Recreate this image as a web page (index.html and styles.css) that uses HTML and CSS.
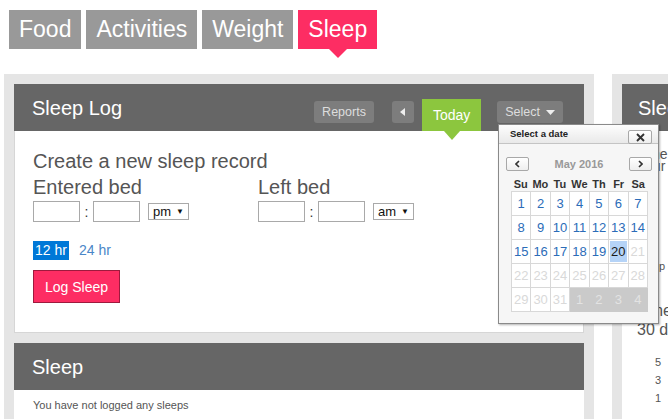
FILE: index.html
```html
<!DOCTYPE html>
<html lang="en">
<head>
<meta charset="utf-8">
<title>Sleep</title>
<link rel="stylesheet" href="styles.css">
</head>
<body>
<nav class="tabs">
  <a class="tab">Food</a>
  <a class="tab">Activities</a>
  <a class="tab">Weight</a>
  <a class="tab active">Sleep</a>
</nav>
<div class="main">
  <div class="col col-left">
    <section class="panel">
      <header class="panel-head">
        <h2 class="panel-title">Sleep Log</h2>
        <div class="controls">
          <button class="btn btn-reports">Reports</button>
          <button class="btn btn-arrow"><svg width="5" height="8" viewBox="0 0 5 8"><path d="M5 0 L0 4 L5 8 Z" fill="#eee"/></svg></button>
          <button class="btn-today">Today</button>
          <button class="btn btn-select">Select <svg class="caret" width="9" height="5" viewBox="0 0 9 5"><path d="M0 0 H9 L4.5 5 Z" fill="#eee"/></svg></button>
        </div>
        <div class="datepicker">
          <div class="dp-title">Select a date</div>
          <button class="dp-close"><svg width="9" height="9" viewBox="0 0 9 9"><path d="M1 1 L8 8 M8 1 L1 8" stroke="#333" stroke-width="1.9"/></svg></button>
          <div class="dp-nav">
            <button class="dp-btn"><svg width="5" height="8" viewBox="0 0 5 8"><path d="M4 1 L1 4 L4 7" fill="none" stroke="#333" stroke-width="1.6"/></svg></button>
            <span class="dp-month">May 2016</span>
            <button class="dp-btn"><svg width="5" height="8" viewBox="0 0 5 8"><path d="M1 1 L4 4 L1 7" fill="none" stroke="#333" stroke-width="1.6"/></svg></button>
          </div>
          <div class="dp-days">
            <span>Su</span><span>Mo</span><span>Tu</span><span>We</span><span>Th</span><span>Fr</span><span>Sa</span>
          </div>
          <div class="dp-grid">
            <span>1</span><span>2</span><span>3</span><span>4</span><span>5</span><span>6</span><span>7</span>
            <span>8</span><span>9</span><span>10</span><span>11</span><span>12</span><span>13</span><span>14</span>
            <span>15</span><span>16</span><span>17</span><span>18</span><span>19</span><span class="sel">20</span><span class="off">21</span>
            <span class="off">22</span><span class="off">23</span><span class="off">24</span><span class="off">25</span><span class="off">26</span><span class="off">27</span><span class="off">28</span>
            <span class="off">29</span><span class="off">30</span><span class="off">31</span><span class="next">1</span><span class="next">2</span><span class="next">3</span><span class="next">4</span>
          </div>
        </div>
      </header>
      <div class="panel-body form">
        <div class="form-title">Create a new sleep record</div>
        <div class="times">
          <div class="time-col">
            <div class="label">Entered bed</div>
            <div class="time-row">
              <span class="inp"></span><span class="colon">:</span><span class="inp"></span>
              <span class="fsel">pm <span class="farr">&#9660;</span></span>
            </div>
          </div>
          <div class="time-col">
            <div class="label">Left bed</div>
            <div class="time-row">
              <span class="inp"></span><span class="colon">:</span><span class="inp"></span>
              <span class="fsel">am <span class="farr">&#9660;</span></span>
            </div>
          </div>
        </div>
        <div class="hours"><span class="hr on">12 hr</span><span class="hr">24 hr</span></div>
        <button class="log-btn">Log Sleep</button>
      </div>
    </section>
    <section class="panel panel-second">
      <header class="panel-head"><h2 class="panel-title">Sleep</h2></header>
      <div class="panel-body empty">You have not logged any sleeps</div>
    </section>
  </div>
  <div class="col col-right">
    <section class="panel">
      <header class="panel-head head-right"><h2 class="panel-title">Sleep Summary</h2></header>
      <div class="panel-body right-body">
        <div class="r-intro">Time asleep<br>Your average</div>
        <div class="r-note">Sleep per night</div>
        <div class="r-head">Time asleep in the<br>30 days</div>
        <div class="r-axis"><span>5</span><span>3</span><span>1</span></div>
      </div>
    </section>
  </div>
</div>
</body>
</html>
```

FILE: styles.css
```css
* { box-sizing: border-box; }
html, body { margin: 0; padding: 0; }
body {
  font-family: "Liberation Sans", Arial, sans-serif;
  background: #fff;
  color: #555;
  width: 668px;
  height: 419px;
  overflow: hidden;
}
button {
  font-family: inherit;
  border: none;
  padding: 0;
  margin: 0;
  cursor: pointer;
}

/* Tabs */
.tabs {
  display: flex;
  gap: 5px;
  padding: 10px 0 0 9px;
}
.tab {
  display: block;
  position: relative;
  height: 39px;
  line-height: 39px;
  padding: 0 10px;
  background: #999;
  color: #fff;
  font-size: 23px;
  text-decoration: none;
}
.tab.active { background: #fd2d63; }
.tab.active::after {
  content: "";
  position: absolute;
  left: 50%;
  top: 100%;
  margin-left: -9px;
  border-left: 9px solid transparent;
  border-right: 9px solid transparent;
  border-top: 9px solid #fd2d63;
}

/* Columns */
.main {
  display: flex;
  gap: 18px;
  margin-top: 25px;
  padding-left: 4px;
}
.col {
  flex-shrink: 0;
  background: #e5e5e5;
  padding: 10px;
  min-height: 345px;
}
.col-left { width: 590px; }
.col-right {
  width: 56px;
  padding-right: 0;
  overflow: hidden;
}

/* Panels */
.panel-second { margin-top: 10px; }
.panel-head {
  position: relative;
  display: flex;
  height: 47px;
  background: #666;
  padding-left: 18px;
}
.panel-title {
  margin: 0;
  padding-top: 12px;
  font-size: 20px;
  font-weight: normal;
  line-height: 24px;
  color: #fff;
  white-space: nowrap;
}
.head-right { padding-left: 16px; }
.panel-body {
  background: #fff;
  border: 1px solid #d6d6d6;
  border-top: none;
}

/* Header controls */
.controls {
  margin-left: auto;
  display: flex;
  align-items: flex-start;
  padding: 15px 21px 0 0;
}
.btn {
  height: 22px;
  margin-top: 2px;
  padding: 0 8px;
  background: #7d7d7d;
  color: #ddd;
  border-radius: 3px;
  font-size: 12.5px;
  line-height: 22px;
  display: flex;
  align-items: center;
}
.btn-arrow {
  width: 22px;
  margin-left: 18px;
  justify-content: center;
  padding: 0;
}
.btn-today {
  position: relative;
  margin-left: 8px;
  height: 32px;
  padding: 0 11px;
  background: #8cc63e;
  color: #fff;
  font-size: 14px;
  line-height: 32px;
}
.btn-today::after {
  content: "";
  position: absolute;
  left: 50%;
  top: 100%;
  margin-left: -8px;
  border-left: 8px solid transparent;
  border-right: 8px solid transparent;
  border-top: 9px solid #8cc63e;
}
.btn-select { margin-left: 16px; }
.btn-select .caret { margin-left: 6px; }

/* Datepicker */
.datepicker {
  position: absolute;
  left: 484px;
  top: 40px;
  width: 161px;
  height: 200px;
  background: #f6f6f6;
  border: 1px solid #8a8a8a;
  box-shadow: 1px 1px 2px rgba(0,0,0,0.3);
  z-index: 5;
}
.dp-title {
  height: 19px;
  line-height: 18px;
  padding-left: 11px;
  background: linear-gradient(#fdfdfd, #e9e9e9);
  border-bottom: 1px solid #c4c4c4;
  font-size: 9.5px;
  font-weight: bold;
  color: #222;
}
.dp-close {
  position: absolute;
  top: 5px;
  right: 6px;
  width: 24px;
  height: 14px;
  background: linear-gradient(#fff, #eee);
  border: 1px solid #a8a8a8;
  border-radius: 2px;
  display: flex;
  align-items: center;
  justify-content: center;
}
.dp-nav {
  margin-top: 13px;
  height: 14px;
  display: flex;
  align-items: center;
  justify-content: space-between;
  padding: 0 6px 0 7px;
}
.dp-btn {
  width: 23px;
  height: 14px;
  background: linear-gradient(#fff, #eee);
  border: 1px solid #a8a8a8;
  border-radius: 2px;
  display: flex;
  align-items: center;
  justify-content: center;
}
.dp-month {
  font-size: 11px;
  font-weight: bold;
  color: #999;
}
.dp-days,
.dp-grid {
  display: grid;
  grid-template-columns: repeat(7, 1fr);
  width: 137px;
  margin-left: 12px;
}
.dp-days {
  margin-top: 7px;
  height: 13px;
  line-height: 13px;
  font-size: 11px;
  font-weight: bold;
  color: #333;
  text-align: center;
}
.dp-grid {
  border-top: 1px solid #d8d8d8;
  border-left: 1px solid #d8d8d8;
}
.dp-grid span {
  height: 24px;
  line-height: 23px;
  text-align: center;
  font-size: 13px;
  color: #2b6cb8;
  background: #fff;
  border-right: 1px solid #d8d8d8;
  border-bottom: 1px solid #d8d8d8;
}
.dp-grid span.off { color: #d9d9d9; }
.dp-grid span.sel {
  background: #b5d3f7;
  color: #1a1a1a;
  box-shadow: inset 0 0 0 1px #fff;
}
.dp-grid span.next {
  background: #cacaca;
  color: #e3e3e3;
  border-right-color: #cacaca;
  border-bottom-color: #cacaca;
}

/* Form */
.form { padding: 17px 18px 29px 18px; }
.form-title,
.label {
  font-size: 20px;
  line-height: 26px;
  color: #555;
}
.times {
  display: grid;
  grid-template-columns: 225px 225px;
}
.time-row {
  display: flex;
  align-items: center;
  margin-top: 1px;
  height: 21px;
}
.inp {
  display: block;
  width: 47px;
  height: 21px;
  border: 1px solid #a9a9a9;
  background: #fff;
}
.colon {
  width: 13px;
  text-align: center;
  font-size: 14px;
  color: #333;
}
.fsel {
  display: flex;
  align-items: center;
  margin-left: 8px;
  width: 41px;
  height: 17px;
  padding-left: 4px;
  border: 1px solid #a9a9a9;
  background: #fff;
  font-size: 13px;
  color: #111;
}
.farr {
  font-size: 8px;
  margin-left: 5px;
}
.hours {
  display: flex;
  margin-top: 19px;
  font-size: 14px;
  line-height: 19px;
}
.hr { color: #4a86c8; margin-left: 10px; }
.hr.on {
  margin-left: 0;
  padding: 0 2px;
  background: #0078d7;
  color: #fff;
}
.log-btn {
  display: block;
  margin-top: 10px;
  height: 33px;
  padding: 0 11px;
  background: #fd2d63;
  border: 1px solid #9e1a3e;
  color: #fff;
  font-size: 14px;
}

/* Second panel */
.empty {
  padding: 9px 19px 10px;
  font-size: 11px;
  line-height: 13px;
  color: #555;
  border: none;
}

/* Right panel */
.col-right .panel { width: 300px; }
.right-body {
  padding: 17px 0 0 15px;
  min-height: 300px;
  border: none;
  white-space: nowrap;
  color: #555;
}
.r-intro {
  font-size: 14px;
  line-height: 12px;
  color: #555;
}
.r-note {
  margin-top: 88px;
  font-size: 11px;
  line-height: 13px;
  color: #555;
}
.r-head {
  margin-top: 28px;
  font-size: 16px;
  line-height: 19px;
  color: #555;
}
.r-axis {
  display: flex;
  flex-direction: column;
  margin-top: 14px;
  padding-left: 18px;
  font-size: 11px;
  line-height: 18px;
  color: #555;
}
```
